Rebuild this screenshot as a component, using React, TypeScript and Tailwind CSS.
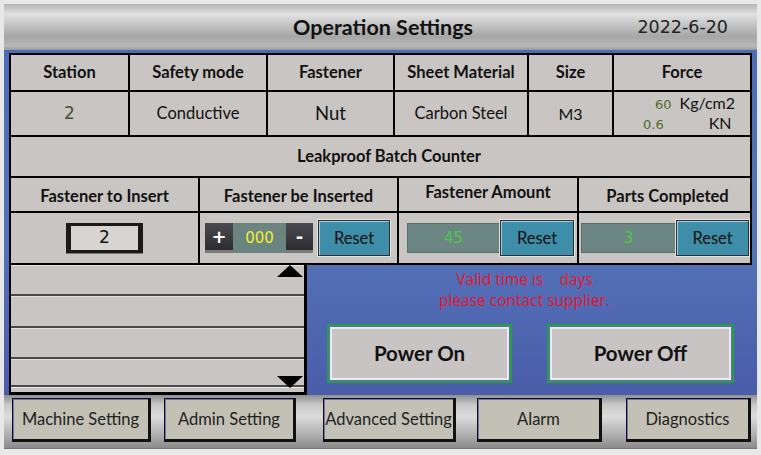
import React from "react";

const cell = "bg-[#c9c5c3] flex items-center justify-center";
const hdr = "font-['Lato'] font-bold text-[16.5px] text-[#111] whitespace-nowrap";

function ResetBtn({ w }: { w: number }) {
  return (
    <div
      className="h-[36px] flex items-center justify-center bg-[#3f8ea9] border border-[#2e2e3a] shadow-[inset_1px_1px_0_#9fd0dd,0_0_0_1px_#e6e2cf] font-['Lato'] text-[16.5px] text-[#111]"
      style={{ width: w }}
    >
      Reset
    </div>
  );
}

function BottomBtn({ label, w, ml }: { label: string; w: number; ml: number }) {
  return (
    <div
      className="h-[44px] flex items-center justify-center bg-[#c3c1b6] border border-[#111] border-r-[3px] border-b-[3px] shadow-[inset_1px_1px_0_#7470b8] font-['Lato'] text-[16.5px] text-[#222] whitespace-nowrap"
      style={{ width: w, marginLeft: ml }}
    >
      {label}
    </div>
  );
}

function PowerBtn({ label, w }: { label: string; w: number }) {
  return (
    <div
      className="h-[59px] border-2 border-[#2a9c46] p-[1px] bg-[#5a72b0]"
      style={{ width: w }}
    >
      <div className="w-full h-full border-2 border-[#eceaf0] bg-[#c8c4c4] flex items-center justify-center font-['Lato'] font-bold text-[20.5px] text-[#111]">
        {label}
      </div>
    </div>
  );
}

function ListRow({ h }: { h: number }) {
  return (
    <div className="bg-[#c9c5c3] border-b-2 border-[#4a4848] shadow-[inset_0_1px_0_#e4e0de]" style={{ height: h }} />
  );
}

export default function App() {
  return (
    <div className="w-[761px] h-[455px] bg-[#e8e8e8] pt-[4px] px-[4px] flex flex-col overflow-hidden">
      {/* Title bar */}
      <div className="h-[46px] grid grid-cols-[1fr_auto_1fr] items-center bg-[linear-gradient(180deg,#b4b4b4_0%,#e2e2e2_22%,#c4c4c4_45%,#a6a6a6_70%,#b8b8b8_92%,#9a9a9a_100%)]">
        <div />
        <div className="font-['Lato'] font-bold text-[21.5px] text-[#111] pl-[5px]">Operation Settings</div>
        <div className="justify-self-end pr-[29px] font-['DejaVu_Sans'] text-[17.5px] text-[#222]">2022-6-20</div>
      </div>

      {/* Blue area */}
      <div className="h-[345px] pt-[3px] px-[5px] bg-[linear-gradient(180deg,#4d6cb6_0%,#5474b9_55%,#4a5caa_100%)] flex flex-col">
        {/* table */}
        <div className="bg-black p-[2px] flex flex-col gap-[2px]">
          <div className="grid grid-cols-[117px_136px_125px_132px_83px_136px] gap-[2px] h-[35px]">
            {["Station", "Safety mode", "Fastener", "Sheet Material", "Size", "Force"].map((t) => (
              <div key={t} className={cell}>
                <span className={hdr}>{t}</span>
              </div>
            ))}
          </div>
          <div className="grid grid-cols-[117px_136px_125px_132px_83px_136px] gap-[2px] h-[43px]">
            <div className={cell}>
              <span className="font-['DejaVu_Sans'] text-[17px] text-[#46522e]">2</span>
            </div>
            <div className={cell}>
              <span className="font-['Lato'] text-[16.5px] text-[#111]">Conductive</span>
            </div>
            <div className={cell}>
              <span className="font-['Lato'] text-[18.5px] text-[#111]">Nut</span>
            </div>
            <div className={cell}>
              <span className="font-['Lato'] text-[16.5px] text-[#111]">Carbon Steel</span>
            </div>
            <div className={cell}>
              <span className="font-['Lato'] text-[16px] text-[#111]">M3</span>
            </div>
            <div className="bg-[#c9c5c3] flex flex-col justify-center leading-[18px]">
              <div className="flex items-baseline pl-[41px]">
                <span className="font-['DejaVu_Sans'] text-[13px] text-[#4f6a2c]">60</span>
                <span className="ml-[8px] font-['Lato'] text-[16px] text-[#111]">Kg/cm2</span>
              </div>
              <div className="flex items-baseline pl-[29px]">
                <span className="font-['DejaVu_Sans'] text-[13px] text-[#4f6a2c]">0.6</span>
                <span className="ml-[45px] font-['Lato'] text-[16px] text-[#111]">KN</span>
              </div>
            </div>
          </div>
          <div className={cell + " h-[39px]"}>
            <span className={hdr + " pl-[17px]"}>Leakproof Batch Counter</span>
          </div>
          <div className="grid grid-cols-[187px_197px_178px_171px] gap-[2px] h-[33px]">
            <div className={cell}>
              <span className={hdr + " pt-[3px]"}>Fastener to Insert</span>
            </div>
            <div className={cell}>
              <span className={hdr + " pt-[3px]"}>Fastener be Inserted</span>
            </div>
            <div className={cell}>
              <span className={hdr + " pb-[4px]"}>Fastener Amount</span>
            </div>
            <div className={cell}>
              <span className={hdr + " pt-[3px] pl-[6px]"}>Parts Completed</span>
            </div>
          </div>
          <div className="grid grid-cols-[187px_197px_178px_171px] gap-[2px] h-[50px]">
            <div className={cell}>
              <div className="w-[77px] h-[30px] bg-[#1a1a1a] py-[3px] px-[5px] shadow-[0_1px_0_#777]">
                <div className="w-full h-full bg-[#d8d4d2] flex items-center justify-center font-['DejaVu_Sans'] text-[17px] text-[#111]">
                  2
                </div>
              </div>
            </div>
            <div className="bg-[#c9c5c3] flex items-center pl-[5px]">
              <div className="w-[28px] h-[30px] bg-[linear-gradient(180deg,#4a4a50,#2c2c30)] border-b-[3px] border-[#7a7a7a] flex items-center justify-center text-white font-['DejaVu_Sans'] font-bold text-[18px] leading-none">
                +
              </div>
              <div className="w-[53px] h-[30px] bg-[#6b8480] flex items-center justify-center font-['DejaVu_Sans'] text-[15px] text-[#f0f030]">
                000
              </div>
              <div className="w-[27px] h-[30px] bg-[linear-gradient(180deg,#4a4a50,#2c2c30)] border-b-[3px] border-[#7a7a7a] flex items-center justify-center text-white font-['DejaVu_Sans'] font-bold text-[18px] leading-none">
                -
              </div>
              <div className="ml-[5px]">
                <ResetBtn w={72} />
              </div>
            </div>
            <div className="bg-[#c9c5c3] flex items-center pl-[8px]">
              <div className="w-[93px] h-[30px] bg-[#6c8683] border border-[#5a6e6a] flex items-center justify-center font-['DejaVu_Sans'] text-[15px] text-[#4fc84a]">
                45
              </div>
              <ResetBtn w={74} />
            </div>
            <div className="bg-[#c9c5c3] flex items-center pl-[2px]">
              <div className="w-[95px] h-[30px] bg-[#6c8683] border border-[#5a6e6a] flex items-center justify-center font-['DejaVu_Sans'] text-[15px] text-[#4fc84a]">
                3
              </div>
              <ResetBtn w={73} />
            </div>
          </div>
        </div>

        {/* lower area */}
        <div className="flex h-[130px]">
          <div className="relative w-[298px] border-l-2 border-r-[3px] border-b-[3px] border-black flex flex-col bg-[#c9c5c3]">
            <ListRow h={31} />
            <ListRow h={32} />
            <ListRow h={31} />
            <ListRow h={28} />
            <div className="flex-1 bg-[#c9c5c3] border-t border-[#eee]" />
            <div className="absolute right-[1px] top-0 w-0 h-0 border-l-[13px] border-r-[13px] border-b-[12px] border-l-transparent border-r-transparent border-b-black" />
            <div className="absolute right-[1px] top-[111px] w-0 h-0 border-l-[13px] border-r-[13px] border-t-[12px] border-l-transparent border-r-transparent border-t-black" />
          </div>
          <div className="flex-1 flex flex-col">
            <div className="flex flex-col items-center pt-[4px] pr-[10px] font-['Open_Sans'] text-[15.5px] leading-[21px] text-[#e8142c]">
              <div className="relative">
                Valid time is&nbsp;&nbsp;&nbsp;&nbsp;days
                <span className="absolute left-[107px] top-[3px] text-[11px] leading-none text-[#6a6a80]">0</span>
              </div>
              <div>please contact supplier.</div>
            </div>
            <div className="flex pl-[20px] gap-[35px] mt-[13px]">
              <PowerBtn label="Power On" w={185} />
              <PowerBtn label="Power Off" w={187} />
            </div>
          </div>
        </div>
      </div>

      {/* bottom bar */}
      <div className="h-[54px] flex items-start pt-[3px] bg-[linear-gradient(180deg,#8e8e8e_0%,#c8c8c8_18%,#dcdcdc_40%,#b0b0b0_75%,#8a8a8a_100%)] border-b border-[#777]">
        <BottomBtn label="Machine Setting" w={139} ml={8} />
        <BottomBtn label="Admin Setting" w={132} ml={13} />
        <BottomBtn label="Advanced Setting" w={133} ml={27} />
        <BottomBtn label="Alarm" w={125} ml={21} />
        <BottomBtn label="Diagnostics" w={125} ml={24} />
      </div>
    </div>
  );
}
